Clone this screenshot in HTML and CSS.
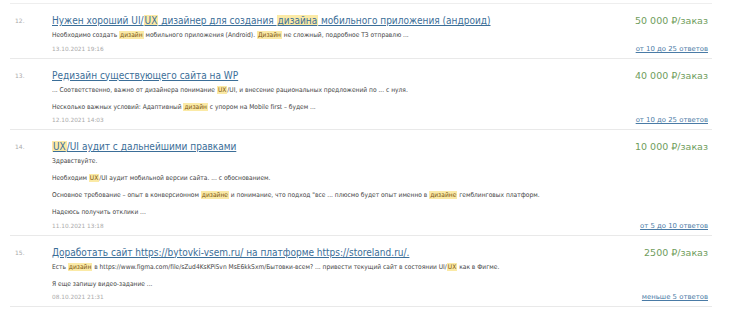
FILE: index.html
```html
<!DOCTYPE html>
<html lang="ru">
<head>
    <meta charset="UTF-8">
    <title>Заказы</title>
    <link rel="stylesheet" href="styles.css">
</head>
<body>
    <div class="list">
        <div class="item">
            <div class="num">12.</div>
            <div class="main">
                <a href="#" class="title">Нужен хороший UI/<mark>UX</mark> дизайнер для создания <mark>дизайна</mark> мобильного приложения (андроид)</a>
                <div class="desc">
                    <p>Необходимо создать <mark>дизайн</mark> мобильного приложения (Android). <mark>Дизайн</mark> не сложный, подробное ТЗ отправлю ...</p>
                </div>
                <div class="date">13.10.2021 19:16</div>
            </div>
            <div class="side">
                <div class="price">50 000 ₽/заказ</div>
                <a href="#" class="answers">от 10 до 25 ответов</a>
            </div>
        </div>

        <div class="item">
            <div class="num">13.</div>
            <div class="main">
                <a href="#" class="title">Редизайн существующего сайта на WP</a>
                <div class="desc">
                    <p>... Соответственно, важно от дизайнера понимание <mark>UX</mark>/UI, и внесение рациональных предложений по ... с нуля.</p>
                    <p>Несколько важных условий: Адаптивный <mark>дизайн</mark> с упором на Mobile first – будем ...</p>
                </div>
                <div class="date">12.10.2021 14:03</div>
            </div>
            <div class="side">
                <div class="price">40 000 ₽/заказ</div>
                <a href="#" class="answers">от 10 до 25 ответов</a>
            </div>
        </div>

        <div class="item">
            <div class="num">14.</div>
            <div class="main">
                <a href="#" class="title"><mark>UX</mark>/UI аудит с дальнейшими правками</a>
                <div class="desc">
                    <p>Здравствуйте.</p>
                    <p>Необходим <mark>UX</mark>/UI аудит мобильной версии сайта. ... с обоснованием.</p>
                    <p>Основное требование – опыт в конверсионном <mark>дизайне</mark> и понимание, что подход "все ... плюсмо будет опыт именно в <mark>дизайне</mark> гемблинговых платформ.</p>
                    <p>Надеюсь получить отклики ...</p>
                </div>
                <div class="date">11.10.2021 13:18</div>
            </div>
            <div class="side">
                <div class="price">10 000 ₽/заказ</div>
                <a href="#" class="answers">от 5 до 10 ответов</a>
            </div>
        </div>

        <div class="item">
            <div class="num">15.</div>
            <div class="main">
                <a href="#" class="title">Доработать сайт https://bytovki-vsem.ru/ на платформе https://storeland.ru/.</a>
                <div class="desc">
                    <p>Есть <mark>дизайн</mark> в https://www.figma.com/file/sZud4KsKPiSvn MsE6kkSxm/Бытовки-всем? ... привести текущий сайт в состоянии UI/<mark>UX</mark> как в Фигме.</p>
                    <p>Я еще запишу видео-задание ...</p>
                </div>
                <div class="date">08.10.2021 21:31</div>
            </div>
            <div class="side">
                <div class="price">2500 ₽/заказ</div>
                <a href="#" class="answers">меньше 5 ответов</a>
            </div>
        </div>
    </div>
</body>
</html>
```

FILE: styles.css
```css
body {
    margin: 0;
    padding: 0;
    background-color: #ffffff;
    font-family: "DejaVu Sans", Verdana, sans-serif;
    color: #444;
}
.list {
    margin: 3px 18px 0 10px;
    border-top: 1px solid #eeeeee;
}
.item {
    display: flex;
    padding: 10px 4px 4px 5px;
    border-bottom: 1px solid #e9e9e9;
}
.num {
    width: 37px;
    flex-shrink: 0;
    font-size: 6px;
    line-height: 14px;
    color: #aaa;
}
.main {
    flex: 1;
    min-width: 0;
}
.title {
    display: block;
    font-family: "DejaVu Sans Condensed", "DejaVu Sans", sans-serif;
    font-stretch: condensed;
    font-size: 10px;
    line-height: 14px;
    color: #3b6e98;
    text-decoration: underline;
}
mark {
    background-color: #fbeaa6;
    color: inherit;
    padding: 0 1px;
}
.desc {
    margin-top: 3px;
}
.desc p {
    margin: 0 0 7.5px 0;
    font-family: "DejaVu Sans Condensed", "DejaVu Sans", sans-serif;
    font-stretch: condensed;
    font-size: 6.6px;
    line-height: 9.5px;
    color: #444;
}
.desc p:last-child {
    margin-bottom: 0;
}
.desc mark {
    color: #7a5210;
}
.date {
    margin-top: 4px;
    font-size: 5.8px;
    line-height: 9px;
    color: #aaa;
}
.side {
    display: flex;
    flex-direction: column;
    align-items: flex-end;
    justify-content: space-between;
    flex-shrink: 0;
    padding-left: 20px;
}
.price {
    font-size: 9.5px;
    line-height: 14px;
    color: #6f9d5c;
}
.answers {
    font-size: 6.9px;
    line-height: 9px;
    color: #4a7ba6;
    text-decoration: underline;
}
```
